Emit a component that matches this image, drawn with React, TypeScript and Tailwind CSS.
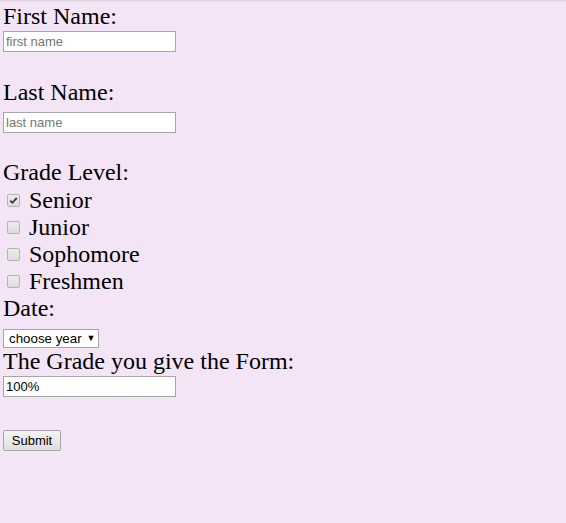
const grades = [
  { label: "Senior", checked: true },
  { label: "Junior", checked: false },
  { label: "Sophomore", checked: false },
  { label: "Freshmen", checked: false },
];

const serif = "font-['Liberation_Serif','Times_New_Roman',serif]";
const sans = "font-['Liberation_Sans',Arial,sans-serif]";

function Box({ checked }: { checked: boolean }) {
  return (
    <span className="ml-[4px] mr-[9px] flex h-[13px] w-[13px] items-center justify-center rounded-[2px] border border-[#b4b4b4] bg-gradient-to-b from-[#ededed] to-[#dcdcdc]">
      {checked && (
        <svg width="9" height="9" viewBox="0 0 9 9">
          <path d="M1.2 4.6 L3.4 6.8 L7.8 1.8" fill="none" stroke="#3a3a3a" strokeWidth="1.8" />
        </svg>
      )}
    </span>
  );
}

const App = () => {
  return (
    <div className={`min-h-[523px] w-full bg-[#f3e5f5] pl-[3px] pt-[3px] text-[24px] leading-[27px] text-black shadow-[inset_0_3px_2px_-2px_rgba(0,0,0,0.1)] ${serif}`}>
      <form className="flex flex-col items-start" onSubmit={(e) => e.preventDefault()}>
        <label>First Name:</label>
        <input
          placeholder="first name"
          className={`mt-[1px] h-[21px] w-[173px] border border-[#a6a6a6] bg-white px-[2px] text-[13px] leading-[17px] text-black placeholder:text-[#757575] outline-none ${sans}`}
        />

        <label className="mt-[27px]">Last Name:</label>
        <input
          placeholder="last name"
          className={`mt-[6px] h-[21px] w-[173px] border border-[#a6a6a6] bg-white px-[2px] text-[13px] leading-[17px] text-black placeholder:text-[#757575] outline-none ${sans}`}
        />

        <label className="mt-[26px]">Grade Level:</label>
        <div className="mt-[1px] flex flex-col">
          {grades.map((g) => (
            <div key={g.label} className="flex h-[27px] items-center">
              <Box checked={g.checked} />
              <span>{g.label}</span>
            </div>
          ))}
        </div>

        <label>Date:</label>
        <div className={`mt-[7px] flex h-[19px] w-[96px] items-center border border-[#a6a6a6] bg-white pl-[5px] text-[13.33px] text-black ${sans}`}>
          <span>choose year</span>
          <span className="ml-[5px] text-[9px]">▼</span>
        </div>

        <label>The Grade you give the Form:</label>
        <input
          defaultValue="100%"
          className={`mt-[1px] h-[21px] w-[173px] border border-[#a6a6a6] bg-white px-[2px] text-[13px] leading-[17px] text-black outline-none ${sans}`}
        />

        <button
          type="submit"
          className={`mt-[33px] flex h-[21px] w-[58px] items-center justify-center rounded-[2px] border border-[#a6a6a6] bg-gradient-to-b from-[#f4f4f4] to-[#dedede] text-[13px] leading-none text-black ${sans}`}
        >
          Submit
        </button>
      </form>
    </div>
  );
};

export default App;
